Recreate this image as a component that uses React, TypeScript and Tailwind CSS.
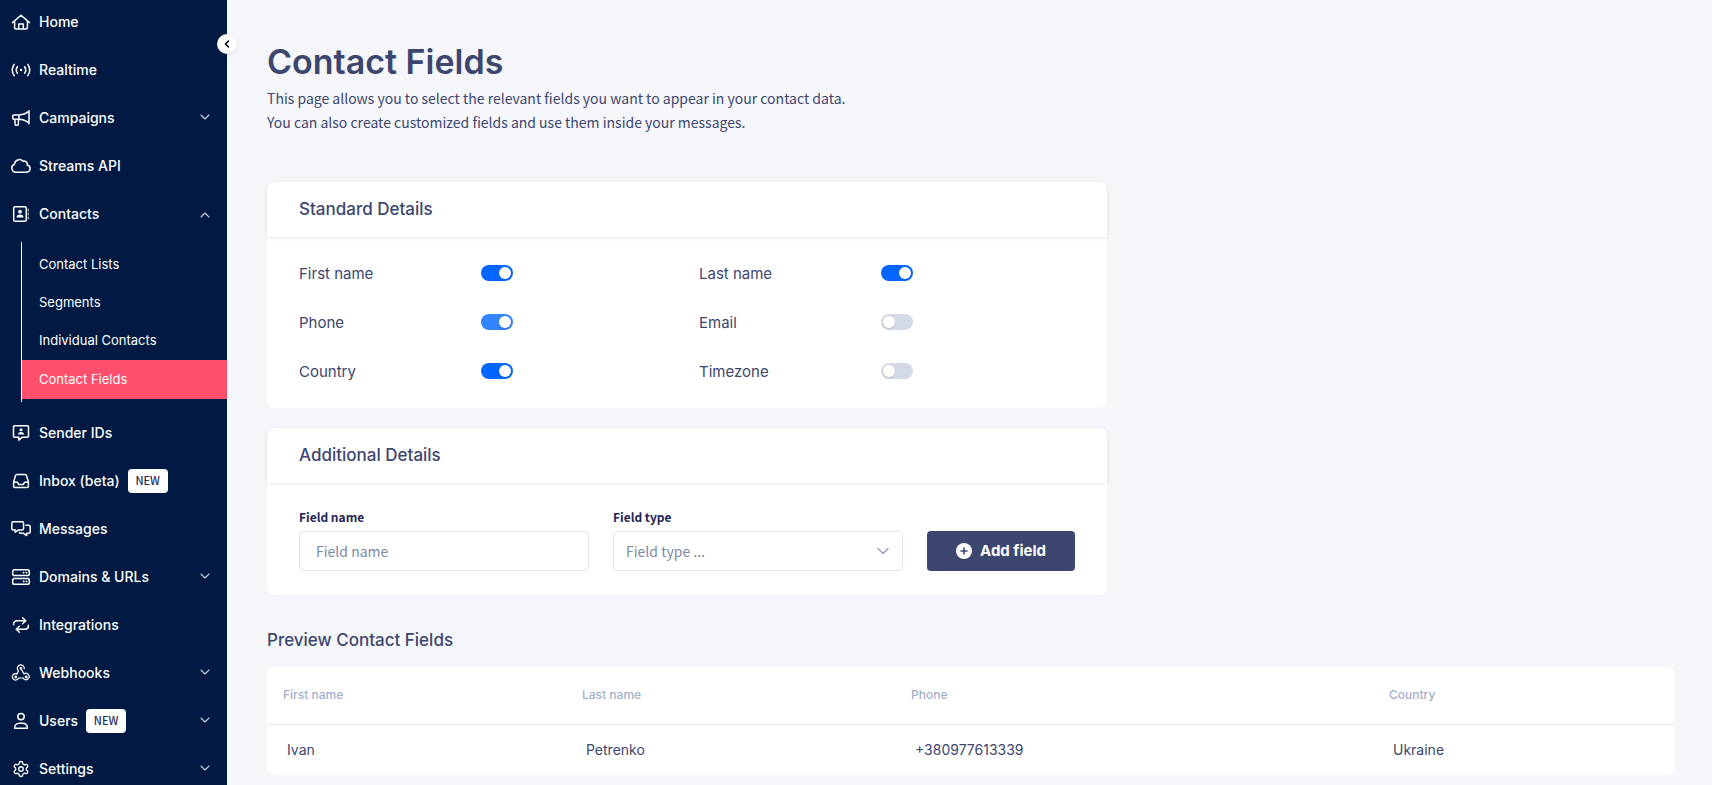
import React, { useState } from "react";
import { ChevronDown, ChevronLeft, ChevronUp, Settings } from "lucide-react";

type IconProps = { children: React.ReactNode };

function Icon({ children }: IconProps) {
  return (
    <svg
      viewBox="0 0 20 20"
      className="size-5 shrink-0"
      fill="none"
      stroke="currentColor"
      strokeWidth="1.5"
      strokeLinecap="round"
      strokeLinejoin="round"
      aria-hidden="true"
    >
      {children}
    </svg>
  );
}

const icons = {
  home: (
    <Icon>
      <path d="M1.5 10.6 10 3.2l8.5 7.4M3.6 9v6.6c0 .9.5 1.5 1.4 1.5h10c.9 0 1.4-.6 1.4-1.5V9M7.7 17v-5h4.6v5" />
    </Icon>
  ),
  realtime: (
    <Icon>
      <path d="M3.2 4.4c-2.4 3.4-2.4 7.8 0 11.2M16.8 4.4c2.4 3.4 2.4 7.8 0 11.2M6.4 6.7c-1.4 2-1.4 4.6 0 6.6M13.6 6.7c1.4 2 1.4 4.6 0 6.6" />
      <circle cx="10" cy="10" r="1.2" fill="currentColor" stroke="none" />
    </Icon>
  ),
  campaigns: (
    <Icon>
      <path d="M18 2.8v13M2.9 6.9h5.1c3.7 0 7-1.3 10-3.7v11.8c-3-2.4-6.3-3.7-10-3.7H2.9c-.7 0-1.2-.5-1.2-1.2V8.1c0-.7.5-1.2 1.2-1.2ZM8 7v4.5M4 11.5v4.8c0 .6.3.9.9.9h1.6c.6 0 .9-.3.9-.9v-4.7" />
    </Icon>
  ),
  cloud: (
    <Icon>
      <path d="M5 16.2a4.1 4.1 0 0 1-1.6-7.9A5 5 0 0 1 12 5.2a3.2 3.2 0 0 1 4.2 3.7 3.7 3.7 0 0 1-.6 7.3Z" />
    </Icon>
  ),
  contacts: (
    <Icon>
      <rect x="2.7" y="2.7" width="12.6" height="14.6" rx="1.6" />
      <circle cx="9" cy="7.7" r="1.9" fill="currentColor" stroke="none" />
      <path d="M5.500 13.500c0-2 1.200-3.100 3.500-3.100s3.500 1.100 3.500 3.100Z" fill="currentColor" stroke="none" />
      <path d="M17.300 5.300v1.400M17.300 9.300v1.400M17.300 13.300v1.400" opacity=".6" />
    </Icon>
  ),
  sender: (
    <Icon>
      <path d="M3.500 2.700h13c.6 0 1 .4 1 1v9.500c0 .6-.4 1-1 1h-5l-3.700 2.900v-2.900H3.500c-.6 0-1-.4-1-1V3.700c0-.6.4-1 1-1Z" />
      <circle cx="10" cy="6.700" r="1.500" fill="currentColor" stroke="none" />
      <path d="M7 11.600c0-1.700 1-2.700 3-2.700s3 1 3 2.700Z" fill="currentColor" stroke="none" />
    </Icon>
  ),
  inbox: (
    <Icon>
      <path d="M2.600 11 4.500 4.500c.2-.7.7-1.100 1.400-1.100h8.200c.7 0 1.200.4 1.400 1.100L17.400 11v4.200c0 .9-.5 1.400-1.400 1.400H4c-.9 0-1.400-.5-1.400-1.400ZM2.700 11.200h3.700l1.400 2.400h4.400l1.400-2.400h3.700" />
    </Icon>
  ),
  messages: (
    <Icon>
      <path d="M2.200 2.800h9c.9 0 1.400.5 1.400 1.400v5.300c0 .9-.5 1.400-1.400 1.400H7.600L4.300 13.200v-2.300H2.200c-.9 0-1.400-.5-1.400-1.400V4.200c0-.9.5-1.400 1.400-1.400Z" />
      <path d="M15 6.300h2.800c.9 0 1.400.5 1.400 1.400v5.200c0 .9-.5 1.400-1.400 1.400h-2.100v2.300l-3.100-2.300H9.800c-.6 0-1.100-.3-1.300-.8" />
    </Icon>
  ),
  domains: (
    <Icon>
      <rect x="1.700" y="2.700" width="16.600" height="5.900" rx="1.800" />
      <rect x="1.700" y="11.400" width="16.600" height="5.900" rx="1.800" />
      <path d="M12.600 5.600h.1M15.400 5.600h.1M12.600 14.400h.1M15.400 14.400h.1" strokeWidth="1.800" />
    </Icon>
  ),
  integrations: (
    <Icon>
      <path d="M2.600 9.800V9a3.200 3.200 0 0 1 3.200-3.200H14M11.600 2.800l3.200 3-3.200 3M17.400 10.200v.8a3.200 3.200 0 0 1-3.200 3.200H6M8.400 11.200l-3.200 3 3.200 3" />
    </Icon>
  ),
  webhooks: (
    <Icon>
      <g strokeWidth="1.200">
        <path d="M6.600 6.800a3.500 3.500 0 1 1 6.700-1.300M6.600 6.800c.2.600.5 1 .9 1.400l-1.700 2.700" />
        <path d="M5.800 10.900a3.200 3.200 0 1 0 1.700 4.100h5M9.900 5.500l3.100 5.400M13 10.900a3.200 3.200 0 1 1-.5 4.800" />
        <circle cx="9.900" cy="5.300" r=".8" />
        <circle cx="4.700" cy="14" r=".8" />
        <circle cx="15.200" cy="14" r=".8" />
      </g>
    </Icon>
  ),
  users: (
    <Icon>
      <circle cx="10" cy="5.600" r="3.200" />
      <path d="M3.600 17.200c0-3.200 1.900-5 5-5h2.800c3.100 0 5 1.800 5 5Z" />
    </Icon>
  ),
  settings: <Settings className="size-5 shrink-0 p-px" strokeWidth={1.8} aria-hidden="true" />,
};

type Item = {
  label: string;
  icon: keyof typeof icons;
  badge?: boolean;
  menu?: "open" | "closed";
  children?: string[];
};

const items: Item[] = [
  { label: "Home", icon: "home" },
  { label: "Realtime", icon: "realtime" },
  { label: "Campaigns", icon: "campaigns", menu: "closed" },
  { label: "Streams API", icon: "cloud" },
  {
    label: "Contacts",
    icon: "contacts",
    menu: "open",
    children: ["Contact Lists", "Segments", "Individual Contacts", "Contact Fields"],
  },
  { label: "Sender IDs", icon: "sender" },
  { label: "Inbox (beta)", icon: "inbox", badge: true },
  { label: "Messages", icon: "messages" },
  { label: "Domains & URLs", icon: "domains", menu: "closed" },
  { label: "Integrations", icon: "integrations" },
  { label: "Webhooks", icon: "webhooks", menu: "closed" },
  { label: "Users", icon: "users", badge: true, menu: "closed" },
  { label: "Settings", icon: "settings", menu: "closed" },
];

function Sidebar() {
  return (
    <aside className="sticky top-0 h-screen w-[227px] shrink-0 bg-[#001a43] text-white">
      <nav className="h-full overflow-hidden">
        <ul className="flex flex-col gap-1">
          {items.map((item) => (
            <li key={item.label}>
              <a href="#" className="flex h-11 items-center pr-3.5 pl-[11px] text-sm font-medium">
                {icons[item.icon]}
                <span className="ml-2">{item.label}</span>
                {item.badge && (
                  <span className="ml-2 flex h-6 w-10 items-center justify-center rounded bg-white font-['Noto_Sans_CJK_SC',sans-serif] text-[11px] font-medium text-[#1f2d55]">
                    NEW
                  </span>
                )}
                {item.menu === "closed" && (
                  <ChevronDown className="mb-0.5 ml-auto size-4 text-slate-300" strokeWidth={1.6} />
                )}
                {item.menu === "open" && (
                  <ChevronUp className="mt-0.5 ml-auto size-4 text-slate-300" strokeWidth={1.6} />
                )}
              </a>
              {item.children && (
                <ul className="mt-1.5 mb-[5px] ml-[21px] border-l border-white pt-1 pb-[3px]">
                  {item.children.map((child) => (
                    <li key={child}>
                      <a
                        href="#"
                        className={
                          child === "Contact Fields"
                            ? "flex h-[39px] items-center bg-[#ff4f6c] pl-[17px] text-[13px]"
                            : "flex h-[38px] items-center pl-[17px] text-[13px]"
                        }
                      >
                        {child}
                      </a>
                    </li>
                  ))}
                </ul>
              )}
            </li>
          ))}
        </ul>
      </nav>
      <button
        type="button"
        aria-label="Collapse menu"
        className="absolute top-[34px] -right-2.5 flex size-5 items-center justify-center rounded-full bg-white text-black shadow-sm"
      >
        <ChevronLeft className="size-3" strokeWidth={3} />
      </button>
    </aside>
  );
}

type ToggleProps = { label: string; initial: boolean; locked?: boolean };

function Toggle({ label, initial, locked }: ToggleProps) {
  const [on, setOn] = useState(initial);
  return (
    <label className="flex h-[49px] items-center text-[15px]">
      <span className="w-[182px] pt-1">{label}</span>
      <input
        type="checkbox"
        role="switch"
        checked={on}
        disabled={locked}
        onChange={() => setOn(!on)}
        className="h-4 w-8 appearance-none rounded-full bg-[#d3d9e7] p-0.5 before:block before:size-3 before:rounded-full before:bg-white before:shadow-sm checked:bg-[#0066ff] checked:before:translate-x-4 disabled:bg-[#3385ff]"
      />
    </label>
  );
}

function Card({ title, children }: { title: string; children: React.ReactNode }) {
  return (
    <section className="rounded-lg bg-white">
      <h2 className="flex h-[55px] items-center rounded-t-lg px-8 text-[17px] font-medium shadow-[0_1px_4px_rgba(0,0,0,0.1)]">
        {title}
      </h2>
      {children}
    </section>
  );
}

const columns = [
  { name: "First name", value: "Ivan", width: "w-[299px]" },
  { name: "Last name", value: "Petrenko", width: "w-[329px]" },
  { name: "Phone", value: "+380977613339", width: "w-[478px]" },
  { name: "Country", value: "Ukraine", width: "w-[302px]" },
];

export default function App() {
  return (
    <div className="flex min-h-screen bg-[#f5f6fa] font-['Inter',sans-serif] text-[#3d466e]">
      <Sidebar />
      <main className="min-w-0 grow pt-[42px] pr-[37px] pb-2.5 pl-10">
        <h1 className="text-[34px] leading-10 font-semibold">Contact Fields</h1>
        <p className="mt-1 font-['Noto_Sans_CJK_SC',sans-serif] text-sm leading-6">
          This page allows you to select the relevant fields you want to appear in your contact data.
          <br />
          You can also create customized fields and use them inside your messages.
        </p>

        <div className="mt-12 flex max-w-[840px] flex-col gap-5">
          <Card title="Standard Details">
            <div className="grid grid-cols-2 pt-[11px] pr-2 pb-[13px] pl-8">
              <Toggle label="First name" initial={true} />
              <Toggle label="Last name" initial={true} />
              <Toggle label="Phone" initial={true} locked />
              <Toggle label="Email" initial={false} />
              <Toggle label="Country" initial={true} />
              <Toggle label="Timezone" initial={false} />
            </div>
          </Card>

          <Card title="Additional Details">
            <form className="flex items-end gap-6 px-8 py-6 font-['Noto_Sans_CJK_SC',sans-serif]">
              <div className="flex min-w-0 flex-1 flex-col gap-1">
                <label htmlFor="field-name" className="text-xs leading-5 font-bold text-[#1f2555]">
                  Field name
                </label>
                <input
                  id="field-name"
                  type="text"
                  placeholder="Field name"
                  className="h-10 w-full rounded border border-[#dfe6f0] bg-white px-4 text-sm placeholder:text-[#7b8aa5]"
                />
              </div>
              <div className="flex min-w-0 flex-1 flex-col gap-1">
                <label htmlFor="field-type" className="text-xs leading-5 font-bold text-[#1f2555]">
                  Field type
                </label>
                <div className="grid items-center">
                  <select
                    id="field-type"
                    className="col-start-1 row-start-1 h-10 w-full appearance-none rounded border border-[#dfe6f0] bg-white px-3 text-sm text-[#7b8aa5]"
                  >
                    <option>Field type ...</option>
                  </select>
                  <ChevronDown
                    className="pointer-events-none col-start-1 row-start-1 mr-2.5 size-5 justify-self-end text-[#93a1bb]"
                    strokeWidth={1.8}
                  />
                </div>
              </div>
              <button
                type="button"
                className="flex h-10 w-[148px] items-center justify-center gap-2 rounded bg-[#3d466e] font-['Inter',sans-serif] text-[15px] font-bold text-white"
              >
                <svg viewBox="0 0 16 16" className="size-4" aria-hidden="true">
                  <circle cx="8" cy="8" r="8" fill="currentColor" />
                  <path d="M8 5v6M5 8h6" stroke="#3d466e" strokeWidth="1.6" strokeLinecap="round" />
                </svg>
                Add field
              </button>
            </form>
          </Card>
        </div>

        <h2 className="mt-[33px] text-[17px] leading-6 font-medium">Preview Contact Fields</h2>
        <div className="mt-[15px] overflow-hidden rounded-lg bg-white">
          <table className="w-full text-left">
            <thead>
              <tr className="border-b border-[#e6e8eb] text-xs text-[#a3b0cb]">
                {columns.map((c) => (
                  <th key={c.name} scope="col" className={`${c.width} h-[57px] pl-4 font-medium`}>
                    {c.name}
                  </th>
                ))}
              </tr>
            </thead>
            <tbody>
              <tr className="h-[51px] text-sm">
                {columns.map((c) => (
                  <td key={c.name} className="pl-5">
                    {c.value}
                  </td>
                ))}
              </tr>
            </tbody>
          </table>
        </div>
      </main>
    </div>
  );
}
